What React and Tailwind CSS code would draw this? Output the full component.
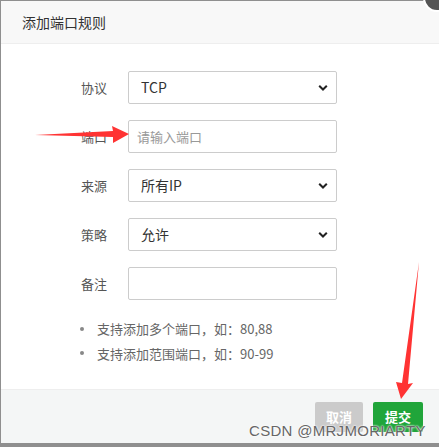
import React from "react";

const font = { fontFamily: '"Microsoft YaHei","Noto Sans CJK SC","Liberation Sans",sans-serif' };

function Chevron() {
  return (
    <svg width="10" height="7" viewBox="0 0 10 7" className="absolute right-[8px] top-1/2 -translate-y-1/2">
      <path d="M1.2 1.2 L5 5 L8.8 1.2" fill="none" stroke="#222" strokeWidth="2" />
    </svg>
  );
}

function Row({ label, children }) {
  return (
    <div className="flex items-center h-[33px]">
      <div className="w-[106px] shrink-0 whitespace-nowrap text-right text-[13px] text-[#555]">{label}</div>
      <div className="ml-[21px] w-[209px] h-[33px] relative">{children}</div>
    </div>
  );
}

function Select({ value }) {
  return (
    <div className="h-full w-full border border-[#ccc] rounded-[2px] bg-white flex items-center pl-[12px] text-[14px] text-[#333] relative">
      {value}
      <Chevron />
    </div>
  );
}

export default function App() {
  return (
    <div className="w-[439px] h-[447px] bg-[#8f8f8f] relative overflow-hidden" style={font}>
      <div className="absolute left-[1px] top-[1px] right-0 bottom-[4px] bg-white flex flex-col">
        <div className="h-[43px] bg-[#f8f8f8] border-b border-[#eee] flex items-center pl-[21px] text-[14px] text-[#333]">
          添加端口规则
        </div>
        <div className="flex-1 flex flex-col pt-[27px] gap-[16px]">
          <Row label="协议"><Select value="TCP" /></Row>
          <Row label="端口">
            <div className="h-full w-full border border-[#ccc] rounded-[2px] bg-white flex items-center pl-[8px] text-[13px] text-[#999]">请输入端口</div>
          </Row>
          <Row label="来源"><Select value="所有IP" /></Row>
          <Row label="策略"><Select value="允许" /></Row>
          <Row label="备注">
            <div className="h-full w-full border border-[#ccc] rounded-[2px] bg-white" />
          </Row>
          <ul className="pl-[79px] pt-[3px] text-[13px] text-[#666] flex flex-col gap-[5px]">
            <li className="flex items-center"><span className="w-[4px] h-[4px] rounded-full bg-[#888] mr-[13px]" />支持添加多个端口，如：80,88</li>
            <li className="flex items-center"><span className="w-[4px] h-[4px] rounded-full bg-[#888] mr-[13px]" />支持添加范围端口，如：90-99</li>
          </ul>
        </div>
        <div className="h-[54px] bg-[#f4f6f6] border-t border-[#eee] flex items-center justify-end pr-[16px] gap-[10px]">
          <div className="w-[48px] h-[30px] rounded-[2px] bg-[#cbcbcb] text-white font-bold text-[13px] flex items-center justify-center">取消</div>
          <div className="w-[50px] h-[30px] rounded-[2px] bg-[#20a53a] text-white font-bold text-[13px] flex items-center justify-center">提交</div>
        </div>
      </div>
      <div className="absolute right-[-12px] top-[-16px] w-[28px] h-[28px] rounded-full bg-[#555] border-2 border-white" />
      <svg className="absolute left-0 top-0" width="439" height="447" viewBox="0 0 439 447">
        <polygon points="35,135 113,131 112,126 129,134 113,143 113,137" fill="#f33" />
        <polygon points="419,262 408,384 413,383 401,399 396,382 402,383" fill="#f33" />
      </svg>
      <div
        className="absolute left-[249px] top-[420px] text-[15px] text-[#666] tracking-[0.3px]"
        style={{ fontFamily: '"Liberation Sans",sans-serif', textShadow: "0 0 2px #fff, 0 0 2px #fff" }}
      >
        CSDN @MRJMORIARTY
      </div>
    </div>
  );
}
